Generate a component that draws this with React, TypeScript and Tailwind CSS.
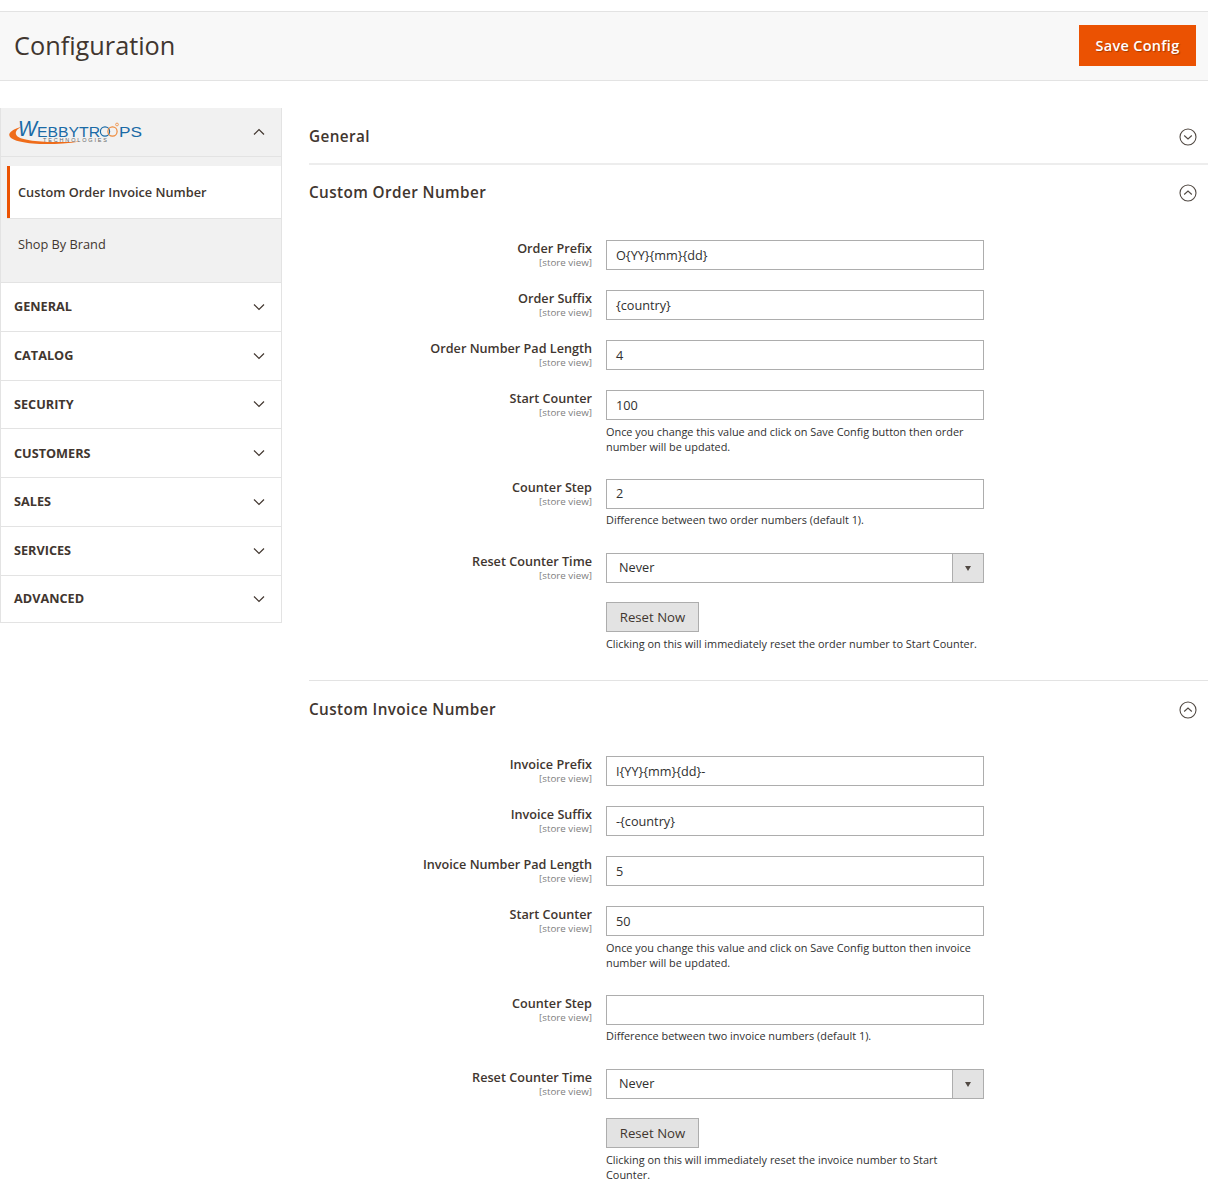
const fontStack = "font-['Open_Sans',sans-serif]";

const ChevronDown = () => (
  <svg width="12" height="8" viewBox="0 0 12 8" fill="none" stroke="#41362f" strokeWidth="1.2">
    <path d="M1 1.5 L6 6.5 L11 1.5" />
  </svg>
);

const ChevronUp = () => (
  <svg width="12" height="8" viewBox="0 0 12 8" fill="none" stroke="#41362f" strokeWidth="1.2">
    <path d="M1 6.5 L6 1.5 L11 6.5" />
  </svg>
);

const CircleToggle = ({ open }: { open: boolean }) => (
  <svg className="mt-[3px]" width="18" height="18" viewBox="0 0 18 18" fill="none" stroke="#514943" strokeWidth="1.1">
    <circle cx="9" cy="9" r="8" />
    <path d={open ? "M5.2 10.5 L9 7 L12.8 10.5" : "M5.2 7.5 L9 11 L12.8 7.5"} />
  </svg>
);

const Logo = () => (
  <div className="h-[32px] w-[140px]">
    <svg width="140" height="32" viewBox="0 0 140 32" className="overflow-visible">
      <path d="M13 10.5 C5 13 -1 16 0.5 20 C3 27 35 31 71 25.5 C45 27 14 26 8 20 C5 16 8 13 13 10.5 Z" fill="#ef6c1a" />
      <text x="9" y="20" fontFamily="Liberation Sans, sans-serif" fontSize="22" fontStyle="italic" fill="#1a6aa6" textLength="19" lengthAdjust="spacingAndGlyphs">W</text>
      <text x="28" y="20.5" fontFamily="Liberation Sans, sans-serif" fontSize="14" fill="#1a6aa6" textLength="63" lengthAdjust="spacingAndGlyphs">EBBYTR</text>
      <circle cx="96" cy="15.5" r="4.6" fill="none" stroke="#1a6aa6" strokeWidth="1.2" />
      <circle cx="103.5" cy="15.5" r="4.6" fill="none" stroke="#ef8a3a" strokeWidth="1.2" />
      <circle cx="108" cy="8.5" r="1.4" fill="none" stroke="#ef8a3a" strokeWidth="0.8" />
      <text x="110" y="20.5" fontFamily="Liberation Sans, sans-serif" fontSize="14" fill="#1a6aa6" textLength="23" lengthAdjust="spacingAndGlyphs">PS</text>
      <text x="34" y="25.5" fontFamily="Liberation Sans, sans-serif" fontSize="5.5" fill="#666" textLength="64" lengthAdjust="spacing">TECHNOLOGIES</text>
    </svg>
  </div>
);

const navItems = ["GENERAL", "CATALOG", "SECURITY", "CUSTOMERS", "SALES", "SERVICES", "ADVANCED"];

const Sidebar = () => (
  <aside className="w-[282px] shrink-0 self-start border-x border-[#e3e3e3]">
    <div className="flex h-[49px] items-center justify-between border-b border-[#e3e3e3] bg-[#f1f1f1] pl-[8px] pr-[16px]">
      <Logo />
      <ChevronUp />
    </div>
    <div className="bg-[#f1f1f1] pl-[6px] pt-[9px]">
      <div className="flex h-[52px] items-center border-l-[3px] border-[#eb5202] bg-white pl-[8px] pt-[1px] text-[12.75px] font-semibold text-[#41362f]">
        Custom Order Invoice Number
      </div>
      <div className="h-[64px] border-t border-[#e3e3e3] pl-[11px] pt-[15px] text-[12.75px] leading-[20px] text-[#41362f]">
        Shop By Brand
      </div>
    </div>
    {navItems.map((item) => (
      <div
        key={item}
        className="flex h-[48.75px] items-center justify-between border-t border-[#e3e3e3] pl-[13px] pr-[16px] text-[12.7px] font-bold text-[#41362f] last:border-b"
      >
        {item}
        <ChevronDown />
      </div>
    ))}
  </aside>
);

interface FieldProps {
  label: string;
  value?: string;
  note?: string;
  select?: boolean;
  gap?: string;
}

const Note = ({ children }: { children: React.ReactNode }) => (
  <div className="mt-[3.5px] text-[10.9px] leading-[15px] text-[#303030]">{children}</div>
);

const Field = ({ label, value, note, select, gap = "mb-[20px]" }: FieldProps) => (
  <div className={`flex ${gap}`}>
    <div className="w-[283px] shrink-0 text-right">
      <div className="text-[12.65px] font-semibold leading-[17px] text-[#41362f]">{label}</div>
      <div className="text-[9.8px] leading-[11px] text-[#808080]">[store view]</div>
    </div>
    <div className="ml-[14px] w-[378px]">
      {select ? (
        <div className="flex h-[30px] items-center justify-between border border-[#adadad] bg-white pl-[12px] text-[12.7px] text-[#303030]">
          {value}
          <div className="flex h-full w-[31px] items-center justify-center border-l border-[#adadad] bg-[#e3e3e3]">
            <div className="h-0 w-0 border-x-[3.5px] border-t-[5px] border-x-transparent border-t-[#514943]" />
          </div>
        </div>
      ) : (
        <div className="flex h-[30px] items-center border border-[#adadad] bg-white pl-[9px] pt-[1px] text-[12.7px] text-[#303030]">
          {value}
        </div>
      )}
      {note && <Note>{note}</Note>}
    </div>
  </div>
);

const ResetRow = ({ note }: { note: string }) => (
  <div className="ml-[297px] w-[378px]">
    <div className="flex h-[30px] w-[93px] items-center justify-center border border-[#adadad] bg-[#e3e3e3] pt-[1px] text-[13.2px] text-[#41362f]">
      Reset Now
    </div>
    <Note>{note}</Note>
  </div>
);

const SectionHead = ({ title, open, className }: { title: string; open: boolean; className: string }) => (
  <div className={`flex items-center justify-between pr-[11px] ${className}`}>
    <span className="text-[15.3px] font-semibold leading-[20px] tracking-[0.4px] text-[#41362f]">{title}</span>
    <CircleToggle open={open} />
  </div>
);

export default function App() {
  return (
    <div className={`min-h-[1200px] bg-white ${fontStack}`}>
      <div className="h-[11px]" />
      <header className="flex h-[70px] items-center justify-between border-y border-[#e3e3e3] bg-[#f8f8f8] pl-[14px] pr-[12px]">
        <h1 className="mb-[2px] text-[25.3px] font-normal leading-[36px] text-[#41362f]">Configuration</h1>
        <div className="mb-[1px] flex h-[41px] w-[117px] items-center justify-center bg-[#eb5202] text-[14.5px] font-semibold tracking-[0.3px] text-white [text-shadow:1px_1px_1px_rgba(0,0,0,0.3)]">
          Save Config
        </div>
      </header>
      <main className="flex pt-[27px]">
        <Sidebar />
        <div className="ml-[27px] flex-1">
          <SectionHead title="General" open={false} className="h-[57px] border-b-2 border-[#ededed]" />
          <SectionHead title="Custom Order Number" open className="h-[55px] pb-[2px]" />
          <div className="mt-[20px]">
            <Field label="Order Prefix" value="O{YY}{mm}{dd}" />
            <Field label="Order Suffix" value="{country}" />
            <Field label="Order Number Pad Length" value="4" />
            <Field
              label="Start Counter"
              value="100"
              note="Once you change this value and click on Save Config button then order number will be updated."
              gap="mb-[25px]"
            />
            <Field label="Counter Step" value="2" note="Difference between two order numbers (default 1)." gap="mb-[26px]" />
            <Field label="Reset Counter Time" value="Never" select gap="mb-[19px]" />
            <ResetRow note="Clicking on this will immediately reset the order number to Start Counter." />
          </div>
          <div className="mt-[29.5px] border-t border-[#e3e3e3]">
            <SectionHead title="Custom Invoice Number" open className="h-[55px]" />
          </div>
          <div className="mt-[20px]">
            <Field label="Invoice Prefix" value="I{YY}{mm}{dd}-" />
            <Field label="Invoice Suffix" value="-{country}" />
            <Field label="Invoice Number Pad Length" value="5" />
            <Field
              label="Start Counter"
              value="50"
              note="Once you change this value and click on Save Config button then invoice number will be updated."
              gap="mb-[25px]"
            />
            <Field label="Counter Step" value="" note="Difference between two invoice numbers (default 1)." gap="mb-[26px]" />
            <Field label="Reset Counter Time" value="Never" select gap="mb-[19px]" />
            <ResetRow note="Clicking on this will immediately reset the invoice number to Start Counter." />
          </div>
        </div>
      </main>
    </div>
  );
}
